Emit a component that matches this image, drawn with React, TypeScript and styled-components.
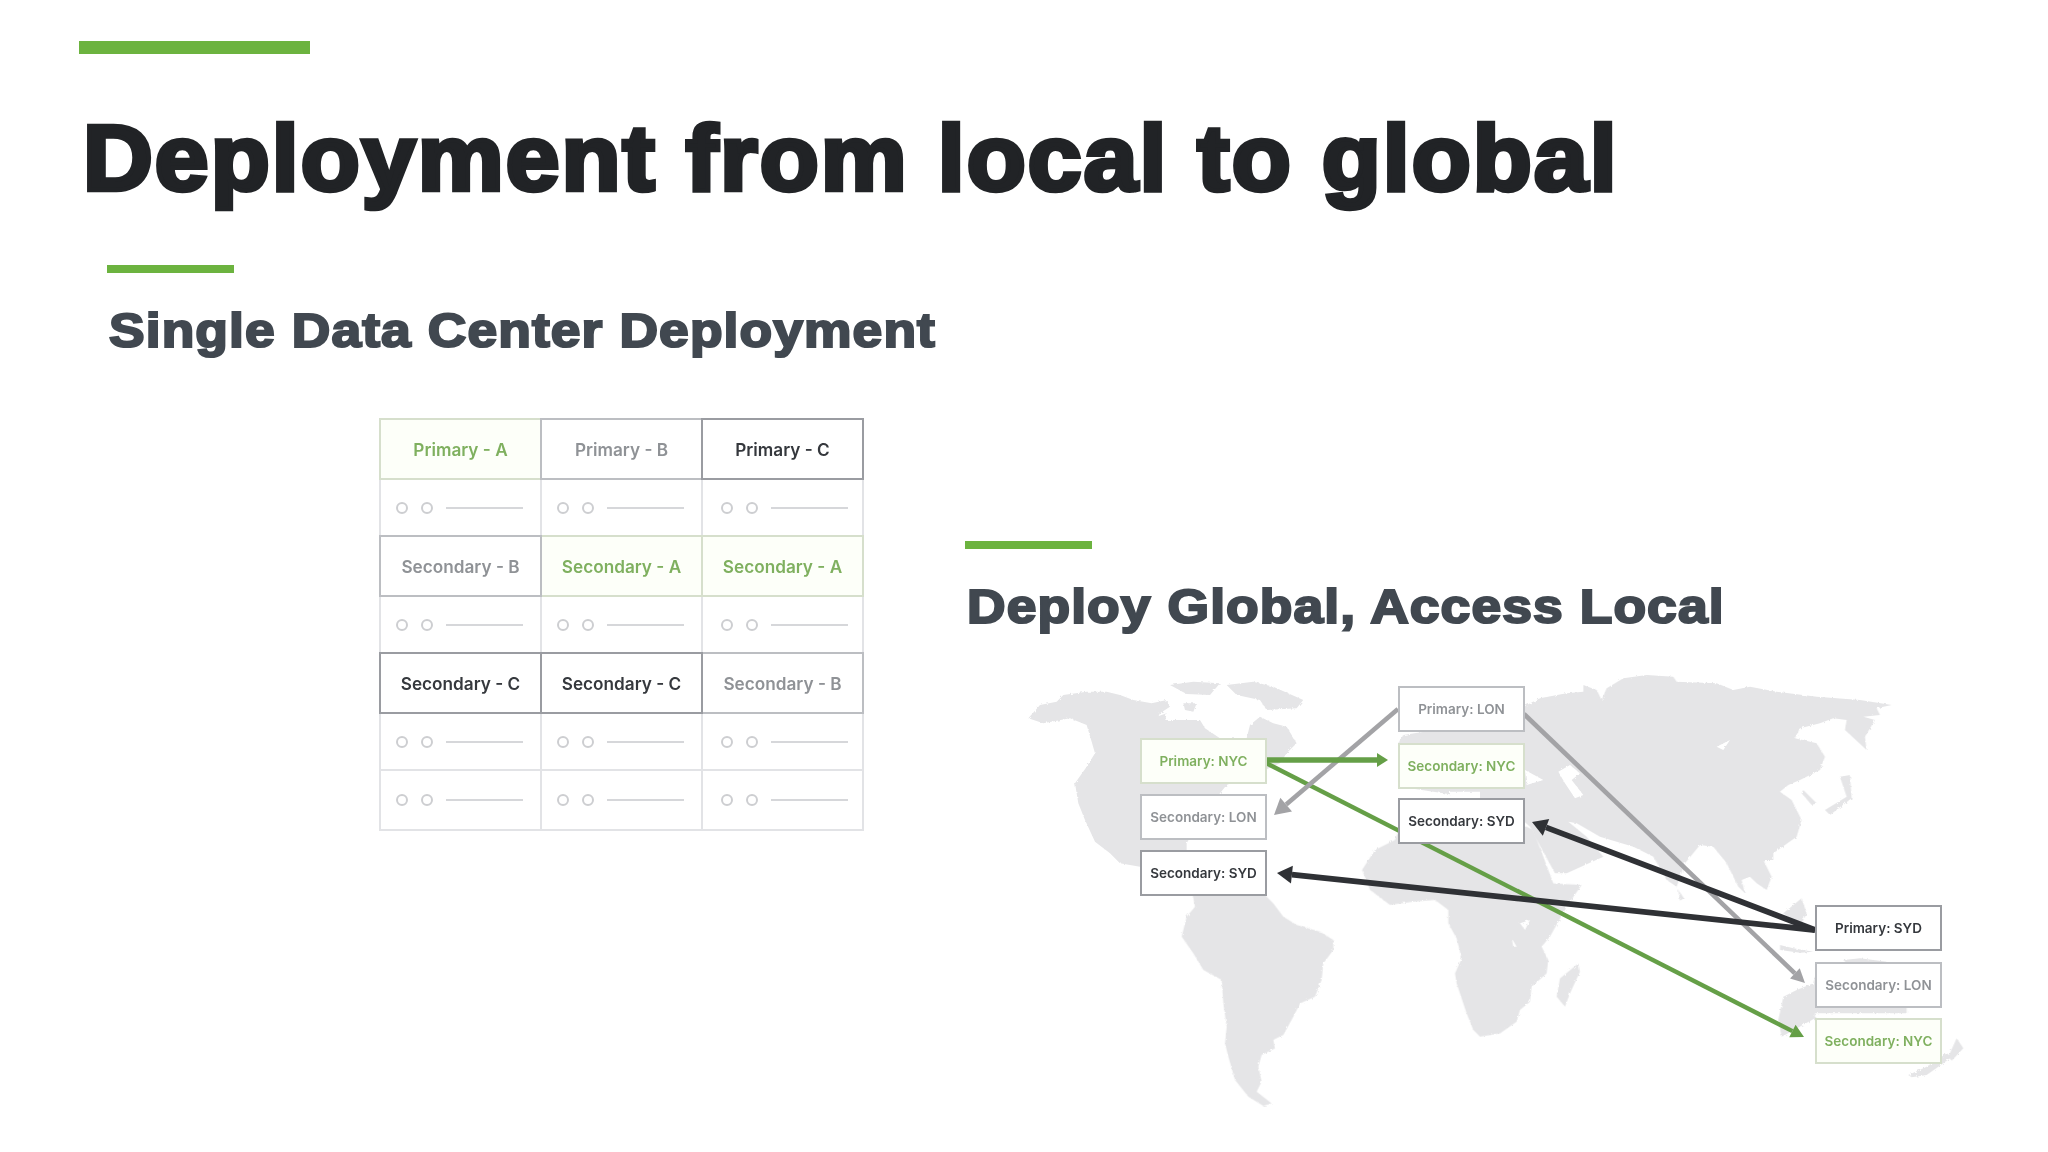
import React from "react";
import styled, { createGlobalStyle } from "styled-components";

type Tone = "green" | "grey" | "dark";

const GREEN = "#6cb33f";

const CELL_TONES: Record<Tone, { text: string; border: string; bg: string; z: number }> = {
  green: { text: "#7fb05f", border: "#d6dfcc", bg: "#fdfff9", z: 1 },
  grey: { text: "#8f9296", border: "#bcbec2", bg: "#ffffff", z: 2 },
  dark: { text: "#35383d", border: "#9a9ca1", bg: "#ffffff", z: 3 },
};

const HEADER_ROWS: { label: string; tone: Tone }[][] = [
  [
    { label: "Primary - A", tone: "green" },
    { label: "Primary - B", tone: "grey" },
    { label: "Primary - C", tone: "dark" },
  ],
  [
    { label: "Secondary - B", tone: "grey" },
    { label: "Secondary - A", tone: "green" },
    { label: "Secondary - A", tone: "green" },
  ],
  [
    { label: "Secondary - C", tone: "dark" },
    { label: "Secondary - C", tone: "dark" },
    { label: "Secondary - B", tone: "grey" },
  ],
];

const NODES: { label: string; tone: Tone; x: number; y: number }[] = [
  { label: "Primary: NYC", tone: "green", x: 120, y: 68 },
  { label: "Secondary: LON", tone: "grey", x: 120, y: 124 },
  { label: "Secondary: SYD", tone: "dark", x: 120, y: 180 },
  { label: "Primary: LON", tone: "grey", x: 378, y: 16 },
  { label: "Secondary: NYC", tone: "green", x: 378, y: 73 },
  { label: "Secondary: SYD", tone: "dark", x: 378, y: 128 },
  { label: "Primary: SYD", tone: "dark", x: 795, y: 235 },
  { label: "Secondary: LON", tone: "grey", x: 795, y: 292 },
  { label: "Secondary: NYC", tone: "green", x: 795, y: 348 },
];

const ARROWS = [
  { from: [1266, 763], to: [1804, 1037], width: 4.4, head: 13, half: 7, color: "#659f47" },
  { from: [1524, 714], to: [1805, 983], width: 4.6, head: 14, half: 7, color: "#a3a3a6" },
  { from: [1398, 709], to: [1274, 815], width: 4.6, head: 16, half: 9, color: "#a3a3a6" },
  { from: [1266, 760], to: [1388, 760], width: 5.5, head: 11, half: 7, color: "#659f47" },
  { from: [1815, 930], to: [1532, 822], width: 5.8, head: 15, half: 9, color: "#2f3135" },
  { from: [1815, 930], to: [1277, 873], width: 5.8, head: 15, half: 9, color: "#2f3135" },
];

const Arrow = ({ from, to, width, head, half, color }: (typeof ARROWS)[number]) => {
  const dx = to[0] - from[0];
  const dy = to[1] - from[1];
  const len = Math.hypot(dx, dy);
  const ux = dx / len;
  const uy = dy / len;
  const bx = to[0] - ux * head;
  const by = to[1] - uy * head;
  const pts = [
    `${to[0]},${to[1]}`,
    `${bx - uy * half},${by + ux * half}`,
    `${bx + uy * half},${by - ux * half}`,
  ].join(" ");
  return (
    <g>
      <line x1={from[0]} y1={from[1]} x2={bx} y2={by} stroke={color} strokeWidth={width} />
      <polygon points={pts} fill={color} />
    </g>
  );
};

const WorldMap = () => (
  <MapSvg viewBox="1020 670 960 450">
    <defs>
      <filter id="coast" x="-5%" y="-5%" width="110%" height="110%">
        <feTurbulence type="fractalNoise" baseFrequency="0.35" numOctaves="2" seed="4" />
        <feDisplacementMap in="SourceGraphic" scale="3" />
        <feGaussianBlur stdDeviation="0.5" />
      </filter>
    </defs>
    <g filter="url(#coast)" fill="#e5e5e7">
      {/* north america + arctic islands, traced in a 3x crop */}
      <g transform="translate(1020 670) scale(0.3333)">
        <polygon points="25,145 60,105 110,95 130,75 200,65 260,65 300,75 340,90 395,100 440,90 450,110 420,130 410,150 480,150 540,150 555,175 600,205 680,205 690,165 720,140 760,160 800,170 830,220 800,250 780,280 735,300 680,320 620,345 600,370 560,420 500,520 500,600 360,590 300,580 270,550 225,515 195,450 175,400 165,340 200,290 225,250 215,215 200,165 150,145 70,160" />
        <polygon points="450,45 520,35 600,40 570,75 500,72" />
        <polygon points="620,45 700,35 760,50 850,90 830,115 740,120 720,90 650,75" />
        <polygon points="490,100 530,100 520,125 495,120" />
        <polygon points="410,140 440,130 435,155 405,155" />
      </g>
      {/* south america + africa */}
      <g transform="translate(1120 880) scale(0.3333)">
        <polygon points="215,30 420,30 460,70 490,110 530,135 600,155 640,180 640,210 610,250 605,300 585,350 540,370 520,410 490,465 460,480 465,505 425,525 415,560 425,605 410,635 455,670 430,678 385,650 345,600 325,530 315,490 320,440 310,370 305,300 250,270 220,220 185,170 200,110 225,80" />
        <polygon points="1385,15 1340,80 1290,170 1265,200 1285,240 1280,280 1235,320 1230,365 1200,390 1190,425 1140,460 1080,470 1060,450 1040,400 1010,310 1005,280 1025,235 1010,175 985,130 985,90 945,60 880,65 810,75 750,30 726,-30 765,-90 825,-120 840,-160 1220,-160 1240,-150 1300,10" />
        <polygon points="1375,250 1380,275 1350,340 1335,380 1310,350 1320,295" />
      </g>
      {/* eurasia */}
      <g transform="translate(1500 660) scale(0.3333)">
        <polygon points="-300,380 -305,330 -290,310 -290,270 -305,250 -290,225 0,180 70,140 120,115 200,100 250,95 250,75 290,90 305,120 320,85 370,55 440,45 520,50 530,65 650,70 700,90 750,80 830,95 950,110 1080,120 1175,135 1130,145 1140,165 1090,170 1125,180 1095,230 1100,270 1035,210 1040,180 1000,175 960,190 900,205 885,235 950,250 975,290 960,330 900,360 865,375 840,395 875,420 905,480 890,530 820,580 820,600 790,600 815,650 800,690 770,670 750,650 725,660 735,700 715,680 680,610 640,560 600,555 555,610 530,680 500,660 460,590 400,560 300,530 230,490 205,485 260,530 310,590 200,640 165,640 105,530 90,500 0,420 -100,410 -200,395" />
        <polygon points="975,450 1040,410 1020,350 1050,345 1055,415 990,465" />
        <polygon points="910,390 950,430 935,435 905,400" />
        <polygon points="535,690 552,715 540,722" />
        <polygon points="850,760 905,715 920,760 900,800" />
      </g>
      {/* australia + new zealand */}
      <g transform="translate(1780 880) scale(0.3333)">
        <polygon points="100,310 50,330 10,350 -5,420 5,470 105,415 105,400 380,400 380,300 105,290" />
        <polygon points="385,585 440,560 500,520 515,530 490,550 440,585 395,592" />
        <polygon points="505,530 530,475 550,505 515,542" />
        <polygon points="190,240 240,235 320,245 290,255 200,250" />
        <polygon points="0,195 40,205 100,215 60,218 0,210" />
      </g>
    </g>
    <g fill="#ffffff" filter="url(#coast)">
      {/* seas and lakes cut out of the land */}
      <g transform="translate(1500 660) scale(0.3333)">
        <polygon points="175,335 210,315 240,340 215,360 250,405 225,415 195,370" />
        <polygon points="75,330 130,360 80,375" />
        <polygon points="650,260 690,240 670,270" />
        <polygon points="-150,395 -60,395 -60,415 -150,420" />
      </g>
      <g transform="translate(1120 880) scale(0.3333)">
        <polygon points="1200,130 1230,120 1215,150" />
        <polygon points="1175,175 1190,200 1180,200" />
      </g>
    </g>
    {ARROWS.map((a, i) => (
      <Arrow key={i} {...a} />
    ))}
  </MapSvg>
);

export default function App() {
  return (
    <>
      <GlobalStyle />
      <Slide>
        <TopBar />
        <Title>Deployment from local to global</Title>
        <Columns>
          <LeftColumn>
            <SubBar />
            <SubTitle>Single Data Center Deployment</SubTitle>
            <Table>
              {HEADER_ROWS.map((row, r) => (
                <React.Fragment key={r}>
                  {row.map((cell, c) => (
                    <HeaderCell key={c} $tone={cell.tone}>
                      {cell.label}
                    </HeaderCell>
                  ))}
                  {[0, 1, 2].map((c) => (
                    <SlotCell key={c} $shift={c === 2}>
                      <Dot />
                      <Dot />
                      <SlotLine />
                    </SlotCell>
                  ))}
                </React.Fragment>
              ))}
              {[0, 1, 2].map((c) => (
                <SlotCell key={c} $shift={c === 2}>
                  <Dot />
                  <Dot />
                  <SlotLine />
                </SlotCell>
              ))}
            </Table>
          </LeftColumn>
          <RightColumn>
            <SubBar />
            <SubTitle>Deploy Global, Access Local</SubTitle>
            <MapCanvas>
              <WorldMap />
              {NODES.map((n) => (
                <Node key={`${n.label}-${n.x}`} $tone={n.tone} $x={n.x} $y={n.y}>
                  {n.label}
                </Node>
              ))}
            </MapCanvas>
          </RightColumn>
        </Columns>
      </Slide>
    </>
  );
}

const GlobalStyle = createGlobalStyle`
  html, body {
    margin: 0;
    background: #ffffff;
  }
`;

const Slide = styled.main`
  box-sizing: border-box;
  width: 2048px;
  height: 1152px;
  padding: 41px 0 0 79px;
  overflow: hidden;
  font-family: "Liberation Sans", Arial, sans-serif;
`;

const TopBar = styled.div`
  width: 231px;
  height: 13px;
  background: ${GREEN};
`;

const Title = styled.h1`
  margin: 51px 0 0 4px;
  font-size: 92px;
  line-height: 106px;
  font-weight: 700;
  color: #212326;
  -webkit-text-stroke: 4.6px #212326;
  letter-spacing: 2px;
  white-space: nowrap;
  transform: scaleX(1.05);
  transform-origin: left;
`;

const Columns = styled.div`
  display: flex;
  margin-top: 54px;
`;

const LeftColumn = styled.section`
  box-sizing: border-box;
  width: 886px;
  padding-left: 28px;
`;

const RightColumn = styled.section`
  padding-top: 276px;
`;

const SubBar = styled.div`
  width: 127px;
  height: 8px;
  background: ${GREEN};
`;

const SubTitle = styled.h2`
  margin: 29px 0 0 2px;
  font-size: 49px;
  line-height: 56px;
  font-weight: 700;
  color: #414850;
  -webkit-text-stroke: 2.2px #414850;
  letter-spacing: 1px;
  white-space: nowrap;
  transform: scaleX(1.09);
  transform-origin: left;
`;

const Table = styled.div`
  display: grid;
  grid-template-columns: repeat(3, 161px);
  grid-template-rows: 60px 57px 60px 57px 60px 57px 60px;
  width: 483px;
  margin: 60px 0 0 272px;
  filter: blur(0.6px);
  font-family: Inter, "Liberation Sans", sans-serif;
`;

const HeaderCell = styled.div<{ $tone: Tone }>`
  display: flex;
  align-items: center;
  justify-content: center;
  box-sizing: border-box;
  margin: 0 -2px -2px 0;
  border: 2px solid ${(p) => CELL_TONES[p.$tone].border};
  background: ${(p) => CELL_TONES[p.$tone].bg};
  color: ${(p) => CELL_TONES[p.$tone].text};
  font-size: 17.2px;
  font-weight: 600;
  z-index: ${(p) => CELL_TONES[p.$tone].z};
`;

const SlotCell = styled.div<{ $shift: boolean }>`
  display: flex;
  align-items: center;
  gap: 13px;
  box-sizing: border-box;
  margin: 0 -2px -2px 0;
  padding-left: ${(p) => (p.$shift ? 18 : 15)}px;
  border: 2px solid #e2e3e6;
`;

const Dot = styled.span`
  box-sizing: border-box;
  width: 12px;
  height: 12px;
  border: 2px solid #cdced1;
  border-radius: 50%;
`;

const SlotLine = styled.span`
  width: 77px;
  height: 2px;
  background: #d6d7da;
`;

const MapCanvas = styled.div`
  position: relative;
  width: 960px;
  height: 450px;
  margin: 36px 0 0 55px;
  font-family: Inter, "Liberation Sans", sans-serif;
`;

const MapSvg = styled.svg`
  position: absolute;
  inset: 0;
  width: 960px;
  height: 450px;
  filter: blur(0.4px);
`;

const Node = styled.div<{ $tone: Tone; $x: number; $y: number }>`
  position: absolute;
  left: ${(p) => p.$x}px;
  top: ${(p) => p.$y}px;
  display: flex;
  align-items: center;
  justify-content: center;
  box-sizing: border-box;
  width: 127px;
  height: 46px;
  border: 2px solid ${(p) => CELL_TONES[p.$tone].border};
  background: ${(p) => CELL_TONES[p.$tone].bg};
  color: ${(p) => CELL_TONES[p.$tone].text};
  font-size: 13.5px;
  font-weight: 600;
  filter: blur(0.6px);
`;
